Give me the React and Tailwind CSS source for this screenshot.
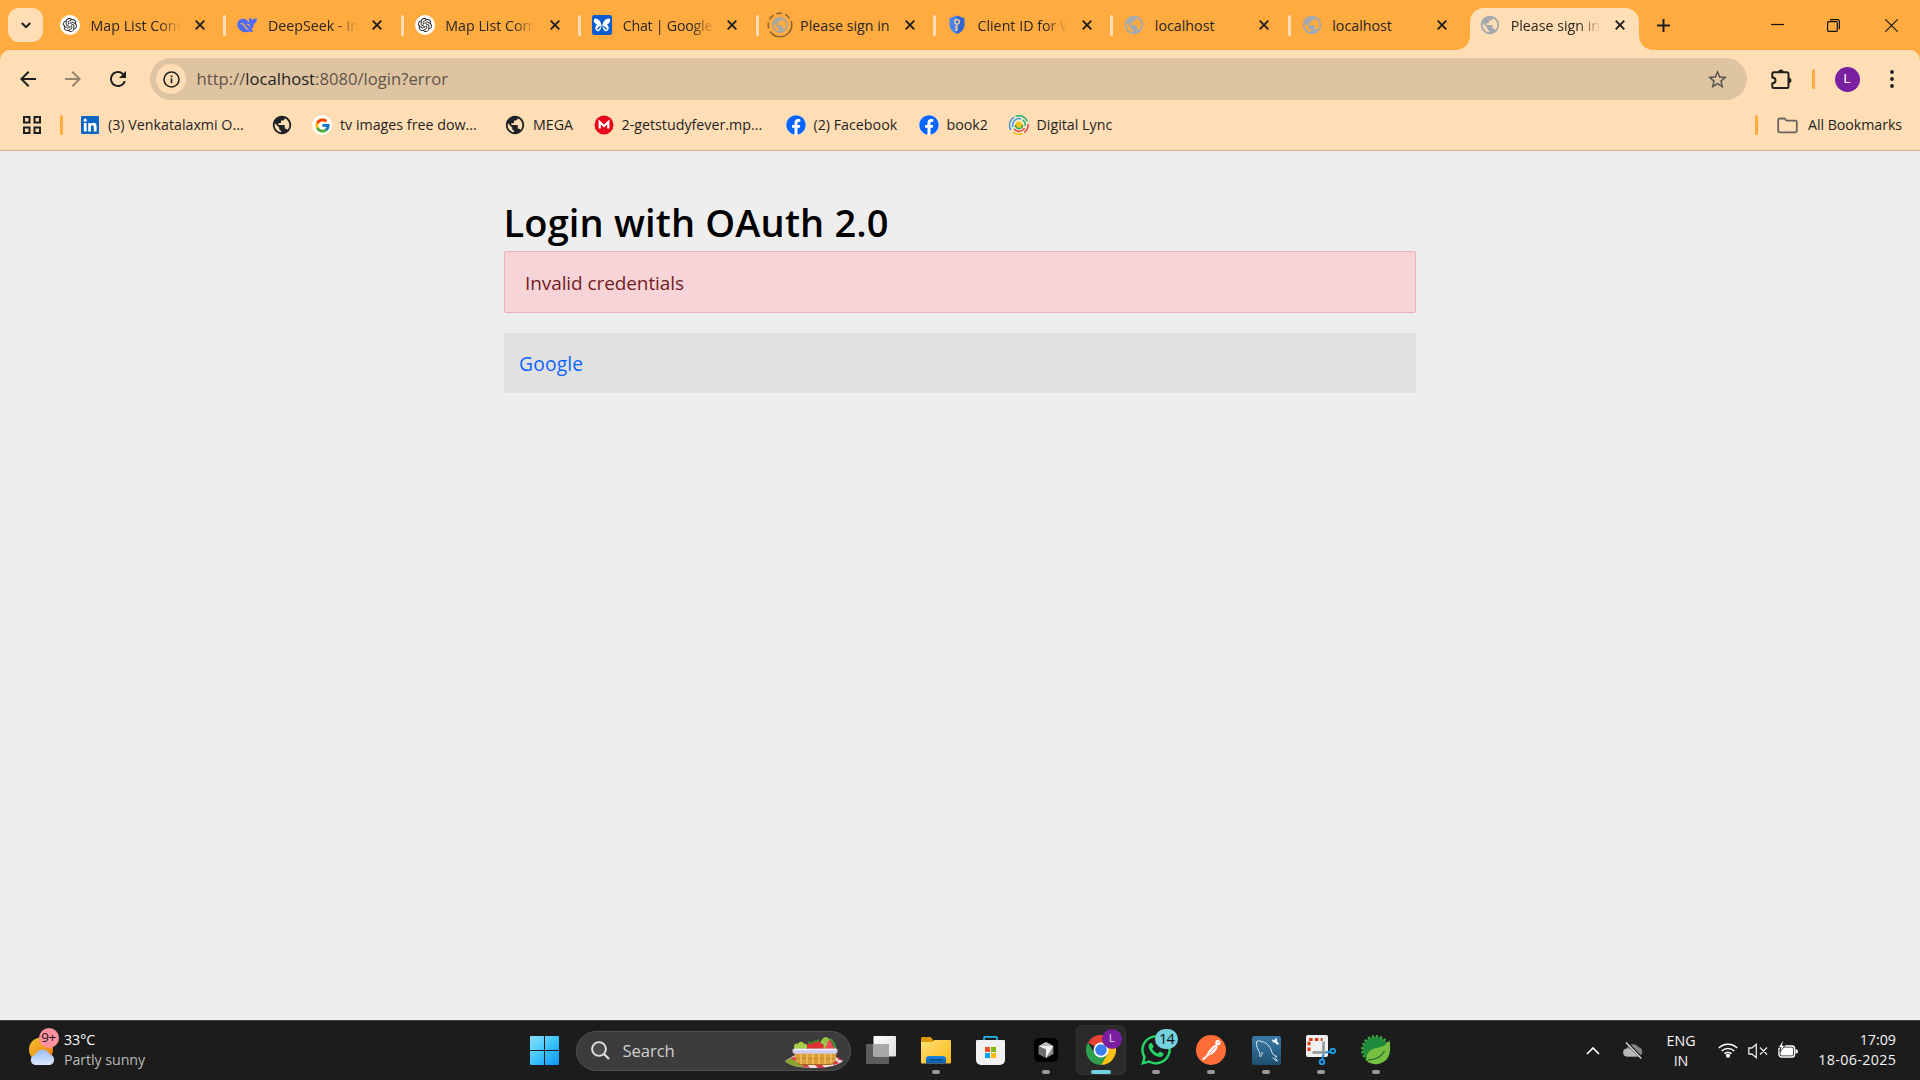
import React from 'react';
import { SiOpenai } from 'react-icons/si';
import { FaFacebook, FaWhatsapp } from 'react-icons/fa';
import { FcGoogle } from 'react-icons/fc';
import { MdPublic, MdArrowBack, MdArrowForward, MdRefresh, MdStarBorder } from 'react-icons/md';

/* ---------- Favicons ---------- */

function OpenAi() {
  return (
    <span className="flex size-5 items-center justify-center rounded-full bg-white text-[#222]">
      <SiOpenai className="size-[14px]" />
    </span>
  );
}

function DeepSeek() {
  return (
    <svg viewBox="0 0 20 20" className="size-5">
      <path
        d="M.3 10.200C.3 6 3 3.300 6.800 3.800c1.700.2 2.900 1.200 3.900 2.400l1.300 1.400c-.3-2.300.2-3.800 1.200-5.300.4 1.500 1.200 2.300 2.300 2.700.4-.8 1.100-1.100 2-1.200.9 0 1.700-.4 2.300-1 .3 3-.7 5.200-2.900 6-.1 2.400-1 4.300-2.500 5.800.5.700 1.100 1.100 1.900 1.500-1.200 1.200-2.800 1.200-4.200.5-2.500 1.200-5.800.8-8.300-1.200C1.600 14 .3 12.300.3 10.200Z"
        fill="#4d6bfe"
      />
      <path d="M4 8.300c2.200.3 3.600 2 4.600 3.900.6 1.100 1.300 1.700 2.200 2" fill="none" stroke="#ffab40" strokeWidth="1.300" strokeLinecap="round" />
      <path d="M10.500 9.300c1.200-.2 2.100.6 2.200 1.700" fill="none" stroke="#ffab40" strokeWidth="1.200" strokeLinecap="round" />
    </svg>
  );
}

function ChatButterfly() {
  return (
    <svg viewBox="0 0 20 20" className="size-5">
      <rect width="20" height="20" rx="2.500" fill="#0b5bd3" />
      <path
        d="M9.600 10.600C9 6.300 6.400 3.300 3.200 3.400c-1.800.2-1.700 2.400-.9 3.800.7 1.300 1.700 2 3 2.300-1.500.9-2.400 2.700-1.900 4.600.4 1.700 2 2.600 3.600 1.800 1.700-.9 2.300-3 2.600-5.300Zm.8 0c.6-4.300 3.200-7.300 6.400-7.200 1.800.2 1.700 2.400.9 3.800-.7 1.300-1.700 2-3 2.300 1.500.9 2.400 2.700 1.900 4.600-.4 1.700-2 2.600-3.600 1.800-1.700-.9-2.300-3-2.600-5.300Z"
        fill="#fff"
      />
      <path d="m5.200 14.500 3.200-3.200M14.800 14.500l-3.200-3.200" stroke="#0b5bd3" strokeWidth="1.300" />
    </svg>
  );
}

function Globe() {
  return (
    <span className="flex size-5 items-center justify-center">
      <MdPublic className="size-[22px] shrink-0 text-[#a3a9ae]" />
    </span>
  );
}

function LoadingGlobe() {
  return (
    <svg viewBox="0 0 26 26" className="-m-[3px] size-[26px]">
      <circle cx="13" cy="13" r="11.800" fill="none" stroke="#8a6532" strokeWidth="1.500" strokeDasharray="30 3.500 6 3 6 3 6 3 6 3 30" />
      <g transform="translate(3.500 3.500) scale(.79)" fill="#a9a79f">
        <path d="M12 2C6.480 2 2 6.480 2 12s4.480 10 10 10 10-4.480 10-10S17.520 2 12 2zm-1 17.930c-3.950-.49-7-3.850-7-7.930 0-.62.08-1.210.21-1.790L9 15v1c0 1.100.9 2 2 2v1.930zm6.900-2.540c-.26-.81-1-1.390-1.900-1.390h-1v-3c0-.55-.45-1-1-1H8v-2h2c.55 0 1-.45 1-1V7h2c1.100 0 2-.9 2-2v-.41c2.930 1.190 5 4.060 5 7.410 0 2.080-.8 3.970-2.100 5.390z" />
      </g>
    </svg>
  );
}

function Shield() {
  return (
    <svg viewBox="0 0 20 20" className="size-5">
      <path d="M10 .5 2.500 3.200v6.600c0 4 3 7.700 7.500 9.200Z" fill="#4a86f0" />
      <path d="M10 .5v18.500c4.500-1.500 7.500-5.200 7.500-9.200V3.200Z" fill="#2f66d4" />
      <circle cx="10" cy="6.800" r="2.300" fill="none" stroke="#f5c98f" strokeWidth="1.400" />
      <path d="M10 9.200v6.600M10 12h-2M10 14.800h-2" stroke="#f5c98f" strokeWidth="1.400" />
    </svg>
  );
}

function DarkGlobe() {
  return (
    <span className="flex size-5 items-center justify-center">
      <MdPublic className="size-[22px] shrink-0 text-[#1f2226]" />
    </span>
  );
}

function LinkedIn() {
  return (
    <svg viewBox="0 0 18 18" className="mx-px size-[18px]">
      <rect width="18" height="18" rx="1" fill="#0a66c2" />
      <circle cx="4.200" cy="4.200" r="1.600" fill="#fff" />
      <path d="M2.800 7h2.800v8.500H2.800zM7.200 7h2.600v1.200C10.300 7.400 11.200 6.800 12.500 6.800c2.500 0 3.100 1.600 3.100 3.900v4.800h-2.800v-4.300c0-1.100-.2-2-1.400-2s-1.500.9-1.500 2v4.300H7.200z" fill="#fff" />
    </svg>
  );
}

function GoogleG() {
  return (
    <span className="flex size-5 items-center justify-center rounded-full bg-white">
      <FcGoogle className="size-[17px]" />
    </span>
  );
}

function Mega() {
  return (
    <svg viewBox="0 0 20 20" className="size-5">
      <circle cx="10" cy="10" r="9.500" fill="#e5091b" />
      <path d="M5.700 13.500V7l4.300 4 4.300-4v6.500" fill="none" stroke="#fff" strokeWidth="2.200" />
    </svg>
  );
}

function Facebook() {
  return (
    <span className="flex size-5 items-center justify-center rounded-full bg-white">
      <FaFacebook className="size-5 text-[#0866ff]" />
    </span>
  );
}

function DigitalLync() {
  return (
    <svg viewBox="0 0 20 20" className="size-5" fill="none" strokeWidth="1.500">
      <circle cx="10" cy="10" r="9.800" fill="#f7ead2" />
      <path d="M2 15A9.200 9.200 0 0 1 5 2.200" stroke="#3b93d3" />
      <path d="M6.500 1.500a9.200 9.200 0 0 1 12 5" stroke="#25b366" />
      <path d="M19 9a9.200 9.200 0 0 1-4 8.500" stroke="#e5433f" />
      <path d="M13.500 18.500a9.200 9.200 0 0 1-9.500-1.500" stroke="#f4b81d" />
      <path d="M4 12a6.300 6.300 0 0 1 8-8" stroke="#3b93d3" />
      <path d="M13.500 4.800A6.300 6.300 0 0 1 16.200 11" stroke="#25b366" />
      <path d="M15.500 13A6.300 6.300 0 0 1 5 14" stroke="#e5433f" />
      <circle cx="10" cy="10" r="3.600" fill="#f6c21c" stroke="#25a45a" strokeDasharray="11 12" />
    </svg>
  );
}

/* ---------- Browser chrome ---------- */

function CloseX() {
  return (
    <svg viewBox="0 0 10 10" className="size-[10px] shrink-0">
      <path d="m.7.7 8.600 8.600M9.300.7.700 9.300" stroke="#1f1f1f" strokeWidth="1.900" />
    </svg>
  );
}

const tabs = [
  { icon: <OpenAi />, title: 'Map List Conv' },
  { icon: <DeepSeek />, title: 'DeepSeek - In' },
  { icon: <OpenAi />, title: 'Map List Conv' },
  { icon: <ChatButterfly />, title: 'Chat | Google', tight: true },
  { icon: <LoadingGlobe />, title: 'Please sign in', plain: true },
  { icon: <Shield />, title: 'Client ID for W' },
  { icon: <Globe />, title: 'localhost', plain: true },
  { icon: <Globe />, title: 'localhost', plain: true, noLine: true },
];

function TabBody({ icon, title, plain, tight }) {
  return (
    <>
      <span className="flex size-5 shrink-0 items-center justify-center">{icon}</span>
      <span
        className={
          plain
            ? 'ml-[10.500px] w-[92px] pt-px whitespace-nowrap'
            : tight
              ? 'ml-[10.500px] w-[92px] overflow-hidden pt-px tracking-[-0.250px] whitespace-nowrap [mask-image:linear-gradient(to_right,#000_68px,transparent_92px)]'
              : 'ml-[10.500px] w-[92px] overflow-hidden pt-px whitespace-nowrap [mask-image:linear-gradient(to_right,#000_68px,transparent_90px)]'
        }
      >
        {title}
      </span>
      <span className="ml-[12.500px]">
        <CloseX />
      </span>
    </>
  );
}

function TabStrip() {
  return (
    <div className="flex h-[50px] items-center bg-[#ffab40] text-[14.250px] text-[#2a2620]">
      <div className="ml-2 flex h-[34px] w-[35px] items-center justify-center rounded-[11px] bg-[#ffddb5]">
        <svg viewBox="0 0 10 7" className="h-[7px] w-[10px]">
          <path d="m.8 1 4.200 4.200L9.200 1" fill="none" stroke="#1f1f1f" strokeWidth="2" />
        </svg>
      </div>
      <div className="ml-1 flex h-full">
        {tabs.map((t, i) => (
          <div key={i} className="flex h-full w-[177.400px] items-center pl-[13px]">
            <TabBody {...t} />
            {!t.noLine ? <span className="ml-auto -mr-[2px] h-[21px] w-[3px] rounded-full bg-[#ffddb5]" /> : null}
          </div>
        ))}
        <div className="relative mt-[7.500px] ml-[4px] flex h-[42.500px] w-[169px] items-center rounded-t-[14px] bg-[#ffddb5] pb-[7.500px] pl-[10px] before:absolute before:bottom-0 before:-left-[14px] before:size-[14px] before:bg-[radial-gradient(circle_at_0_0,transparent_13.500px,#ffddb5_14.200px)] after:absolute after:-right-[14px] after:bottom-0 after:size-[14px] after:bg-[radial-gradient(circle_at_100%_0,transparent_13.500px,#ffddb5_14.200px)]">
          <TabBody icon={<Globe />} title="Please sign in" />
        </div>
      </div>
      <svg viewBox="0 0 13 13" className="ml-[18px] size-[13px]">
        <path d="M6.500 0v13M0 6.500h13" stroke="#1f1f1f" strokeWidth="2" />
      </svg>
      <div className="ml-auto flex items-center gap-[43px] pr-[22.500px]">
        <svg viewBox="0 0 13 13" className="size-[13px]">
          <path d="M0 5.500h13" stroke="#111" strokeWidth="1.200" />
        </svg>
        <svg viewBox="0 0 13 13" className="size-[13px]" fill="none" stroke="#111" strokeWidth="1.200">
          <rect x=".6" y="2.700" width="9.700" height="9.700" rx="1" />
          <path d="M2.800.6h7.600a2 2 0 0 1 2 2v7.600" />
        </svg>
        <svg viewBox="0 0 13 13" className="ml-[2px] size-[13px]">
          <path d="m.3.300 12.400 12.400M12.700.3.300 12.700" stroke="#111" strokeWidth="1.100" />
        </svg>
      </div>
    </div>
  );
}

function Toolbar() {
  return (
    <div className="flex h-[58px] items-center text-[#1f1f1f]">
      <MdArrowBack className="ml-[15.500px] size-6" />
      <MdArrowForward className="ml-[21px] size-6 opacity-45" />
      <MdRefresh className="ml-[21px] size-6" />
      <div className="ml-[20.500px] flex h-[42px] w-[1597px] items-center rounded-full bg-[#dfc4a2] pl-[6px]">
        <span className="flex size-[30px] items-center justify-center rounded-full bg-[#ffddb5]">
          <svg viewBox="0 0 17 17" className="size-[17px]">
            <circle cx="8.500" cy="8.500" r="7.500" fill="none" stroke="#1f1f1f" strokeWidth="1.600" />
            <path d="M8.500 7.500v4.800M8.500 4.500v1.700" stroke="#1f1f1f" strokeWidth="1.700" />
          </svg>
        </span>
        <span className="ml-[10.500px] pt-px text-[16.650px] leading-none text-[#5f554a]">
          http://<span className="text-[#1f1f1f]">localhost</span>:8080/login?error
        </span>
        <MdStarBorder className="mr-[18px] ml-auto size-[23px] text-[#5a5552]" />
      </div>
      <svg viewBox="0 0 21 21" className="ml-[24px] size-[21px]">
        <path d="M3.800 3.300h12.400a1.300 1.300 0 0 1 1.300 1.300v13.200a1.300 1.300 0 0 1-1.300 1.300H2.600a1.300 1.300 0 0 1-1.300-1.300v-3.600c2.200 0 3.200-1.200 3.200-2.800S3.500 8.600 1.300 8.600v-4a1.300 1.300 0 0 1 1.300-1.300Z" fill="none" stroke="#1f1f1f" strokeWidth="2" strokeLinejoin="round" />
        <path d="M7.200 3a2.700 2.500 0 0 1 5.400 0ZM17.800 8.800a2.600 2.700 0 0 1 0 5.400Z" fill="#1f1f1f" />
      </svg>
      <span className="ml-[20px] h-5 w-[3px] rounded-full bg-[#ffab40]" />
      <span className="ml-[19.500px] flex size-[25px] items-center justify-center rounded-full bg-[#7b1fa2] font-['Roboto'] text-[13px] text-white">L</span>
      <svg viewBox="0 0 4 18" className="ml-[30.500px] h-[18px] w-1" fill="#1f1f1f">
        <circle cx="2" cy="2" r="1.900" />
        <circle cx="2" cy="9" r="1.900" />
        <circle cx="2" cy="16" r="1.900" />
      </svg>
    </div>
  );
}

const bookmarks = [
  { icon: <LinkedIn />, label: '(3) Venkatalaxmi O...', w: 'w-[192px]' },
  { icon: <DarkGlobe />, label: '', w: 'w-[40px]' },
  { icon: <GoogleG />, label: 'tv images free dow...', w: 'w-[193px]' },
  { icon: <DarkGlobe />, label: 'MEGA', w: 'w-[88.500px]' },
  { icon: <Mega />, label: '2-getstudyfever.mp...', w: 'w-[192px]' },
  { icon: <Facebook />, label: '(2) Facebook', w: 'w-[133px]' },
  { icon: <Facebook />, label: 'book2', w: 'w-[90px]' },
  { icon: <DigitalLync />, label: 'Digital Lync', w: 'w-[110px]' },
];

function BookmarksBar() {
  return (
    <div className="flex h-[43px] items-center border-b border-[#ccb08f] pb-[8px] text-[14.250px] text-[#1f1f1f] whitespace-nowrap">
      <svg viewBox="0 0 18 18" className="ml-[23px] size-[18px]" fill="none" stroke="#1f1f1f" strokeWidth="2">
        <rect x="1" y="1" width="5.500" height="5.500" />
        <rect x="11.500" y="1" width="5.500" height="5.500" />
        <rect x="1" y="11.500" width="5.500" height="5.500" />
        <rect x="11.500" y="11.500" width="5.500" height="5.500" />
      </svg>
      <span className="mr-[17px] ml-[19px] h-5 w-[3px] rounded-full bg-[#ffab40]" />
      {bookmarks.map((b, i) => (
        <div key={i} className={`flex shrink-0 items-center gap-2 ${b.w}`}>
          {b.icon}
          {b.label ? <span>{b.label}</span> : null}
        </div>
      ))}
      <span className="ml-auto h-5 w-[3px] rounded-full bg-[#ffab40]" />
      <svg viewBox="0 0 21 17" className="ml-[19px] h-[17px] w-[21px]">
        <path d="M2.500 1.500H7.500l2 2.200h9a1.300 1.300 0 0 1 1.300 1.300v9a1.300 1.300 0 0 1-1.300 1.300h-16A1.300 1.300 0 0 1 1.200 14V2.800a1.300 1.300 0 0 1 1.300-1.300Z" fill="none" stroke="#6b6560" strokeWidth="1.800" />
      </svg>
      <span className="mr-[18px] ml-[10px] tracking-[-0.080px]">All Bookmarks</span>
    </div>
  );
}

/* ---------- Taskbar ---------- */

function Weather() {
  return (
    <div className="relative size-[30px]">
      <svg viewBox="0 0 30 30" className="size-[30px]">
        <defs>
          <linearGradient id="sun" x1="0" y1="0" x2="1" y2="1">
            <stop offset="0" stopColor="#f3c12e" />
            <stop offset="1" stopColor="#f0780f" />
          </linearGradient>
          <linearGradient id="cloud" x1="0" y1="0" x2="0" y2="1">
            <stop offset="0" stopColor="#9dbcf2" />
            <stop offset="1" stopColor="#dde9ff" />
          </linearGradient>
        </defs>
        <circle cx="13" cy="13.500" r="12" fill="url(#sun)" />
        <path d="M7.500 29a5 5 0 0 1-.6-9.900 8 8 0 0 1 14.700-.8A5.500 5.500 0 0 1 22 29Z" fill="url(#cloud)" />
      </svg>
      <span className="absolute -top-[8px] left-[11px] flex size-5 items-center justify-center rounded-full bg-[#ff929e] text-[13.500px] tracking-[-0.500px] text-[#151515]">9+</span>
    </div>
  );
}

function WindowsLogo() {
  return (
    <svg viewBox="0 0 29 29" className="size-[29px]">
      <defs>
        <linearGradient id="win" x1="0" y1="0" x2="29" y2="29" gradientUnits="userSpaceOnUse">
          <stop offset="0" stopColor="#8be0ff" />
          <stop offset=".5" stopColor="#3cc4fb" />
          <stop offset="1" stopColor="#0b95f5" />
        </linearGradient>
      </defs>
      <path d="M1 0h13v14H0V1a1 1 0 0 1 1-1ZM15 0h13a1 1 0 0 1 1 1v13H15ZM0 15h14v14H1a1 1 0 0 1-1-1ZM15 15h14v13a1 1 0 0 1-1 1H15Z" fill="url(#win)" />
    </svg>
  );
}

function PicnicBasket() {
  return (
    <svg viewBox="0 0 58 31" className="h-[31px] w-[58px]">
      <path d="M0 24 10 18h38l10 6c-5 4-14 7-28 7S5 29 0 24Z" fill="#f3dfe0" />
      <path d="M0 24l7-3.500c4 5 9 8.500 16 10.300C12 30.500 4 28 0 24Z" fill="#87a52f" />
      <path d="m14 26 5 4 6 .8-4-4ZM29 27l4 4h7l-4-4ZM44 25l5 3 5-2-4-3ZM6 21l4 3 5-2-3-3ZM51 20l3 3 4 1-5-4Z" fill="#d2384a" />
      <path d="M9 14h43l-2 10c-1 2.500-3 3.500-6 3.500H17c-3 0-5-1-6-3.500Z" fill="#dba03a" />
      <path d="M10.500 21.500h40" stroke="#b87824" strokeWidth=".8" strokeDasharray="4 2" />
      <path d="M16 16v11M22 16v11.500M28 16v11.500M34 16v11.500M40 16v11.500M46 16v10" stroke="#edbb5c" strokeWidth="1.800" />
      <path d="M12 25.500c1 1.500 2.500 2 5 2h27c2.500 0 4-.5 5-2" stroke="#a8691b" strokeWidth="1" fill="none" />
      <g fill="#a8cf4a">
        <circle cx="12" cy="9.500" r="3" />
        <circle cx="16" cy="7.500" r="2.800" />
        <circle cx="19.500" cy="9.500" r="2.800" />
        <circle cx="15" cy="11" r="2.500" />
      </g>
      <path d="M34 11C35 4 38 0 41 0c2.500.5 4 3 3 6l-3 6Z" fill="#93c83d" />
      <path d="M37 4c2 2 4 3 6 3" stroke="#d7ec93" strokeWidth="1" />
      <g fill="#e02f35">
        <circle cx="26" cy="9" r="4" />
        <circle cx="31.500" cy="7.500" r="4" />
        <circle cx="35.500" cy="9.500" r="3.200" />
      </g>
      <path d="m23 5 3 1.500 3-2 2.500 0 2.500-1.500" stroke="#3a8b2d" strokeWidth="1.600" fill="none" />
      <path d="M44.500 1.500 50 12.500H39.500Z" fill="#ea4a52" />
      <path d="M45 .8c3.500 2.500 6 6.500 6.300 11.500h-2C49 8 47.500 5 44.500 2.500Z" fill="#4ea03b" />
      <path d="M8.500 11.800h43a1 1 0 0 1 1 1v2a2 2 0 0 1-2 2h-41a2 2 0 0 1-2-2v-2a1 1 0 0 1 1-1Z" fill="#cfcbea" />
      <path d="M9 12.500h42.500" stroke="#f6f4ff" strokeWidth="1.400" />
    </svg>
  );
}

function TaskView() {
  return (
    <svg viewBox="0 0 30 28" className="h-7 w-[30px]">
      <defs>
        <linearGradient id="tvFront" x1="0" y1="0" x2="1" y2="1">
          <stop offset="0" stopColor="#fff" />
          <stop offset="1" stopColor="#dcdcdc" />
        </linearGradient>
      </defs>
      <rect y="8" width="23" height="20" rx="1" fill="#5d5d5d" />
      <rect x="7.500" width="22.500" height="20.500" rx="1" fill="url(#tvFront)" />
      <path d="M7.500 8H23v12.500H7.500Z" fill="#a9a9a9" />
    </svg>
  );
}

function Explorer() {
  return (
    <svg viewBox="0 0 30 27" className="h-[27px] w-[30px]">
      <defs>
        <linearGradient id="fold" x1="0" y1="0" x2="1" y2="1">
          <stop offset="0" stopColor="#ffdf77" />
          <stop offset="1" stopColor="#ffb916" />
        </linearGradient>
        <linearGradient id="foldBlue" x1="0" y1="0" x2="0" y2="1">
          <stop offset="0" stopColor="#1784dc" />
          <stop offset="1" stopColor="#0a5cab" />
        </linearGradient>
      </defs>
      <path d="M0 1.500A1.500 1.500 0 0 1 1.500 0h8l3 3.200V6H0Z" fill="#dd9a06" />
      <path d="M0 5h11l2.500-2H29a1 1 0 0 1 1 1v21.500a1 1 0 0 1-1 1H1a1 1 0 0 1-1-1Z" fill="url(#fold)" />
      <path d="M5 26.500V22a3 3 0 0 1 3-3h14a3 3 0 0 1 3 3v4.500Z" fill="url(#foldBlue)" />
      <path d="M9 22.700h12.500" stroke="#063e78" strokeWidth="1.200" />
    </svg>
  );
}

function Store() {
  return (
    <svg viewBox="0 0 29 29" className="-ml-px size-[29px]">
      <path d="M8 6V1.800A1 1 0 0 1 9 .8h11a1 1 0 0 1 1 1V6" fill="none" stroke="#25b8ee" strokeWidth="1.700" />
      <path d="M0 5a1 1 0 0 1 1-1h27a1 1 0 0 1 1 1v19a5 5 0 0 1-5 5H5a5 5 0 0 1-5-5Z" fill="#f1f1f1" />
      <path d="M9 11h5v5H9Z" fill="#f25022" />
      <path d="M15 11h5v5h-5Z" fill="#7fba00" />
      <path d="M9 17h5v5H9Z" fill="#00a4ef" />
      <path d="M15 17h5v5h-5Z" fill="#ffb900" />
    </svg>
  );
}

function CursorApp() {
  return (
    <svg viewBox="0 0 24 24" className="size-6">
      <rect width="24" height="24" rx="5" fill="#000" />
      <path d="m12 4 7.300 4v8L12 20l-7.300-4V8Z" fill="#8c8c8c" />
      <path d="M4.700 8 12 4l7.300 4L12 12Z" fill="#bdbdbd" />
      <path d="M4.700 8 19.300 8 12 20v-8.500Z" fill="#f2f2f2" />
      <path d="M4.700 8 12 11.500V20l-7.300-4Z" fill="#6f6f6f" />
    </svg>
  );
}

function Chrome() {
  return (
    <svg viewBox="0 0 48 48" className="size-[30px]">
      <path d="M24 24 3.200 12A24 24 0 0 1 44.800 12Z" fill="#ea4335" />
      <path d="M24 12h20.800A24 24 0 0 1 24 48l10.400-18Z" fill="#fbc116" />
      <path d="M13.600 30 3.200 12A24 24 0 0 0 24 48l10.400-18Z" fill="#2da04e" />
      <circle cx="24" cy="24" r="12" fill="#fff" />
      <circle cx="24" cy="24" r="9.300" fill="#3b7ded" />
    </svg>
  );
}

function Postman() {
  return (
    <svg viewBox="0 0 30 30" className="size-[30px]">
      <circle cx="15" cy="15" r="15" fill="#ff6c37" />
      <circle cx="21.800" cy="7.700" r="2.600" fill="#fff" />
      <path d="M19.500 9.800c1.200.2 2 1 2.200 2.200-.8 2.500-2.800 5.300-5.500 7.200l-3.700 1.300-1.500-1.500c1-3.200 4.500-7.200 8.500-9.200Z" fill="#fff" />
      <path d="m12 19.800-4.800 4.600" stroke="#fff" strokeWidth="2" strokeLinecap="round" />
      <path d="m13.300 19 6-7" stroke="#ff6c37" strokeWidth=".8" />
      <circle cx="22.500" cy="7.200" r=".7" fill="#ff6c37" />
    </svg>
  );
}

function MySql() {
  return (
    <svg viewBox="0 0 29 29" className="size-[29px]" fill="none">
      <defs>
        <linearGradient id="sql" x1="0" y1="0" x2="0" y2="1">
          <stop offset="0" stopColor="#3c7ba8" />
          <stop offset="1" stopColor="#1d4f6e" />
        </linearGradient>
      </defs>
      <rect width="29" height="29" rx="2.500" fill="url(#sql)" />
      <path d="M8 17.500C5.500 13 4 9 4.500 6c.5-1.500 3-1.500 4.500-.5 5 .5 9 4.500 10.500 9.500.5 2.500 2 4.500 5.500 5.500-1.500.3-2 .7-2.300 1.300l2.800 3.200c-2-.5-4-2-5-3.500M8 17.500c-.5 1.300-.3 2.300.5 3.300.5-1.300 1-2 1.500-2.500.3-.8.300-1.500 0-2.300" stroke="#dceaf2" strokeWidth="1" />
      <path d="m20 3 1.500 1.500 1.500-1 .5-1.500c1.500.5 2 2 1.300 3.200L27 7.500l-1.500 1.500-2.300-2.300c-1.700.3-3.200-.9-3.200-3.700Z" fill="#fff" />
    </svg>
  );
}

function SnippingTool() {
  return (
    <svg viewBox="0 0 30 30" className="size-[30px]">
      <rect width="22" height="22" rx="2" fill="#f0f0f0" />
      <path d="M3 16V4.500h13.500" fill="none" stroke="#dd3c12" strokeWidth="3" strokeDasharray="3.500 2.300" />
      <path d="M17.500 6.500V19.500M6.500 17.500H20" stroke="#8f959a" strokeWidth="2.500" />
      <path d="m17.500 19.500-1 4.500M20 17.500l4-.7" stroke="#1b8fe0" strokeWidth="2.200" />
      <circle cx="16" cy="27" r="2.300" fill="none" stroke="#1b9cec" strokeWidth="1.900" />
      <circle cx="26.800" cy="16" r="2.300" fill="none" stroke="#1b9cec" strokeWidth="1.900" />
    </svg>
  );
}

function Spring() {
  return (
    <svg viewBox="0 0 30 30" className="size-[30px]">
      <circle cx="14.500" cy="14.500" r="12.800" fill="#1f8a3b" />
      <circle cx="14.500" cy="14.500" r="13.200" fill="none" stroke="#3f9f3c" strokeWidth="2.600" strokeDasharray="2.300 1.850" />
      <path d="M28.500 5c1.200 8 1.200 15-3.500 20-5 5-13 5.500-18.500 1.500C4.500 21 6.500 15.500 13 13.500c6.500-1.500 12-2 15.500-8.500Z" fill="#76bf43" />
      <path d="M7 24.800c8 .2 13.500-3.300 16.500-8.800" fill="none" stroke="#1e6a2d" strokeWidth="1.300" />
    </svg>
  );
}

function AppCell({ children, active, running }) {
  return (
    <div className="flex w-[55px] justify-center">
      <div
        className={
          active
            ? 'relative flex size-[50px] items-center justify-center rounded-md border border-[#333] bg-[#2a2a2a]'
            : 'relative flex size-[50px] items-center justify-center'
        }
      >
        {children}
        {active ? <span className="absolute bottom-0 left-[14px] h-1 w-5 rounded-full bg-[#72d1dc]" /> : null}
        {running ? <span className="absolute bottom-px left-[21px] h-1 w-2 rounded-full bg-[#9a9a9a]" /> : null}
      </div>
    </div>
  );
}

function Tray() {
  return (
    <div className="ml-auto flex items-center text-[14.250px] leading-5 text-[#f4f4f4]">
      <svg viewBox="0 0 14 8" className="h-2 w-[14px]">
        <path d="m1 7 6-6 6 6" fill="none" stroke="#fff" strokeWidth="1.700" />
      </svg>
      <svg viewBox="0 0 20 17" className="ml-[23px] h-[17px] w-5">
        <path d="M4 14.500A4 4 0 0 1 4 6.500 6.500 6.500 0 0 1 15.500 5 5 5 0 0 1 16 14.500Z" fill="#858585" />
        <path d="M1 8c4-3 8-1 10 1l5 5.500H4C0 14 0 10 1 8Z" fill="#b9b9b9" />
        <path d="m3.500.5 15 15.500" stroke="#1c1c1c" strokeWidth="3" />
        <path d="m3 .5 15.300 16" stroke="#e4e4e4" strokeWidth="1.300" />
      </svg>
      <div className="ml-[23px] w-[30px] text-center">
        <div>ENG</div>
        <div>IN</div>
      </div>
      <svg viewBox="0 0 20 16" className="mb-px ml-[22px] h-4 w-5" fill="none" stroke="#fff" strokeWidth="1.500">
        <path d="M.8 6a13 13 0 0 1 18.400 0M3.700 9a9 9 0 0 1 12.600 0M6.500 11.800a5 5 0 0 1 7 0" />
        <circle cx="10" cy="13.700" r="1.400" fill="#fff" />
      </svg>
      <svg viewBox="0 0 20 16" className="ml-[10px] h-4 w-5" fill="none" stroke="#e8e8e8" strokeWidth="1.300">
        <path d="M.8 5h3L8.300 1.300v13.400L3.800 11h-3ZM12 4.500l7 7M19 4.500l-7 7" />
      </svg>
      <svg viewBox="0 0 20 17" className="mb-[3px] ml-[10px] h-[17px] w-5">
        <rect x="1" y="5" width="15.500" height="11" rx="2.500" fill="none" stroke="#fff" strokeWidth="1.400" />
        <rect x="2.500" y="6.500" width="12.500" height="8" rx="1" fill="#fff" />
        <path d="M17.500 8.500h1.200a1 1 0 0 1 1 1v2a1 1 0 0 1-1 1h-1.200Z" fill="#fff" />
        <path d="M4.500 0 .5 6.500h2.300L2 11l5-6.500H4.300L5.500 0Z" fill="#fff" stroke="#1c1c1c" strokeWidth=".8" />
      </svg>
      <div className="mr-6 mb-[2px] ml-px w-[97px] text-right">
        <div>17:09</div>
        <div className="-mr-[.380px] tracking-[0.380px]">18-06-2025</div>
      </div>
    </div>
  );
}

function Taskbar() {
  return (
    <div className="flex h-[60px] items-center border-t border-[#3c4142] bg-[#1c1c1c] font-['Open_Sans',sans-serif]">
      <div className="flex w-[530px] items-center pl-[27.500px]">
        <Weather />
        <div className="mb-[2px] ml-[6.500px] text-[14.250px] leading-5 tracking-[-0.080px] text-white">
          <div>33°C</div>
          <div className="text-[#b9b9b9]">Partly sunny</div>
        </div>
      </div>
      <WindowsLogo />
      <div className="ml-[17px] flex h-10 w-[275px] items-center rounded-full border border-[#505050] bg-[#3c3c3c] pl-[14px]">
        <svg viewBox="0 0 19 19" className="size-[19px]" fill="none" stroke="#e2e2e2">
          <circle cx="8" cy="8" r="6.900" strokeWidth="1.900" fill="#4b4b4b" />
          <path d="m13 13 5 5" strokeWidth="2.200" />
        </svg>
        <span className="ml-[12.500px] pt-px text-[16.600px] tracking-[-0.060px] text-[#cfcfcf]">Search</span>
        <span className="mt-[4px] mr-[7px] ml-auto">
          <PicnicBasket />
        </span>
      </div>
      <div className="mb-px ml-[2.500px] flex">
        <AppCell>
          <TaskView />
        </AppCell>
        <AppCell running>
          <Explorer />
        </AppCell>
        <AppCell>
          <Store />
        </AppCell>
        <AppCell running>
          <CursorApp />
        </AppCell>
        <AppCell active>
          <Chrome />
          <span className="absolute top-[3px] left-[25px] flex size-5 items-center justify-center rounded-full bg-[#7b1fa2] font-['Roboto'] text-[11px] text-[#e5cdee]">L</span>
        </AppCell>
        <AppCell running>
          <FaWhatsapp className="size-[34px] shrink-0 text-[#25d366]" />
          <span className="absolute top-[4px] left-[24px] flex h-5 w-[23px] items-center justify-center rounded-full bg-[#72d1dc] text-[14.500px] tracking-[-0.800px] text-[#101010]">14</span>
        </AppCell>
        <AppCell running>
          <Postman />
        </AppCell>
        <AppCell running>
          <MySql />
        </AppCell>
        <AppCell running>
          <SnippingTool />
        </AppCell>
        <AppCell running>
          <Spring />
        </AppCell>
      </div>
      <Tray />
    </div>
  );
}

/* ---------- Page ---------- */

export default function App() {
  return (
    <div className="flex h-[1080px] w-[1920px] flex-col overflow-hidden bg-[#ffab40] font-['Open_Sans',sans-serif]">
      <TabStrip />
      <div className="rounded-t-[10px] bg-[#ffddb5]">
        <Toolbar />
        <BookmarksBar />
      </div>
      <main className="flex-1 bg-[#eee]">
        <div className="mx-auto w-[912px] pt-[43px]">
          <h1 className="mb-px -ml-[.500px] h-[56px] text-[38px] leading-[56px] font-semibold tracking-[0.150px] text-black">Login with OAuth 2.0</h1>
          <div className="flex h-[62px] items-center rounded-[2px] border border-[#ecb0b7] bg-[#f7d4d7] pt-[2px] pl-5 text-[19px] tracking-[-0.090px] text-[#721c24]">Invalid credentials</div>
          <div className="mt-5 flex h-[60px] items-center bg-[#e1e1e1] pt-[2px] pl-[15px]">
            <a className="text-[19.300px] tracking-[0.150px] text-[#0d65fd]">Google</a>
          </div>
        </div>
      </main>
      <Taskbar />
    </div>
  );
}
